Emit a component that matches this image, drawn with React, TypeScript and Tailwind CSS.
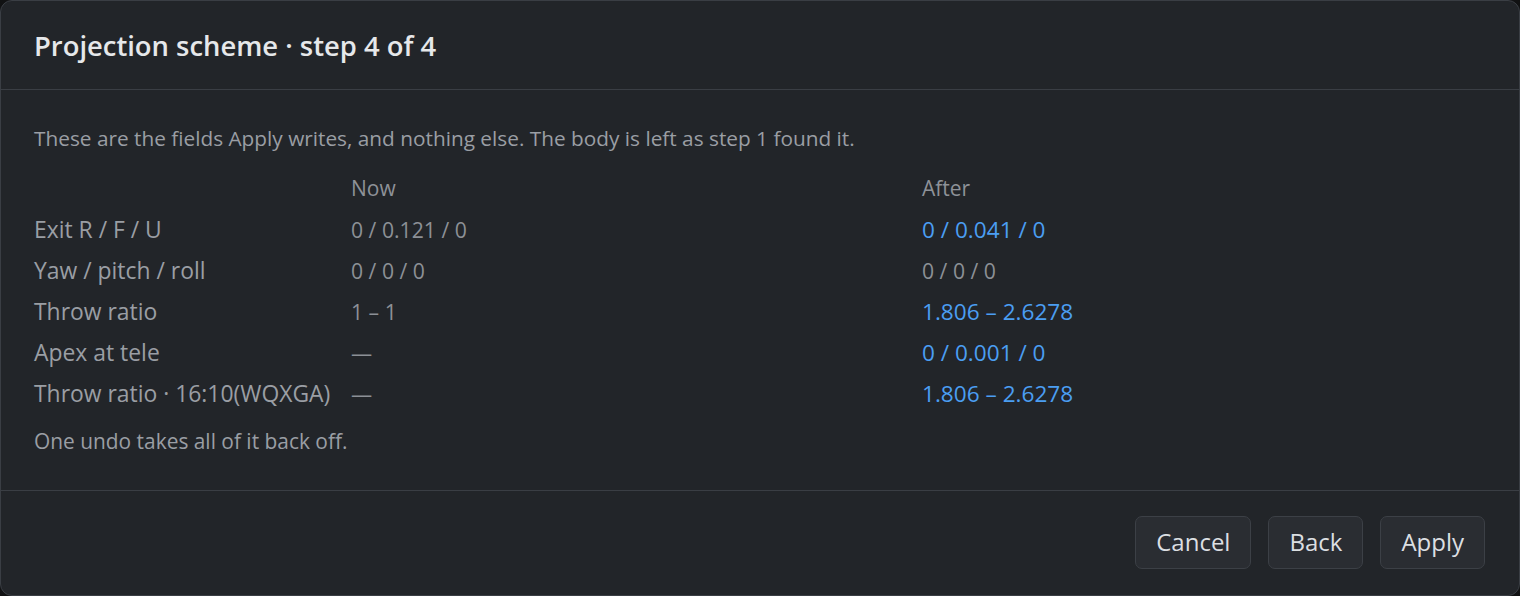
const rows = [
  { label: "Exit R / F / U", now: "0 / 0.121 / 0", after: "0 / 0.041 / 0", changed: true },
  { label: "Yaw / pitch / roll", now: "0 / 0 / 0", after: "0 / 0 / 0", changed: false },
  { label: "Throw ratio", now: "1 – 1", after: "1.806 – 2.6278", changed: true },
  { label: "Apex at tele", now: "—", after: "0 / 0.001 / 0", changed: true },
  { label: "Throw ratio · 16:10(WQXGA)", now: "—", after: "1.806 – 2.6278", changed: true },
];

export default function App() {
  return (
    <div className="h-[596px] bg-[#111213] font-['Open_Sans',sans-serif]">
      <div className="flex h-full flex-col rounded-[12px] border border-[#3a3e44] bg-[#222529]">
        <div className="flex h-[89px] items-center border-b border-[#3a3e44] px-[33px] pt-[2px]">
          <h2 className="text-[27.4px] font-semibold leading-none text-[#e6e8ea]">Projection scheme · step 4 of 4</h2>
        </div>

        <div className="flex-1 px-[33px] pt-[34px]">
          <p className="text-[20.8px] leading-[28px] text-[#9a9ea4]">
            These are the fields Apply writes, and nothing else. The body is left as step 1 found it.
          </p>

          <div className="mt-[16px] grid grid-cols-[317px_571px_1fr] auto-rows-[41px] items-center">
            <div />
            <div className="text-[21px] text-[#8e9298]">Now</div>
            <div className="text-[21px] text-[#8e9298]">After</div>
            {rows.map((r) => (
              <div key={r.label} className="contents">
                <div className="pt-[2px] text-[22.9px] text-[#9a9ea4]">{r.label}</div>
                <div className="text-[21.2px] text-[#8c9096]">{r.now}</div>
                {r.changed ? (
                  <div className="text-[22.6px] text-[#4b9ef2]">{r.after}</div>
                ) : (
                  <div className="text-[21.2px] text-[#8c9096]">{r.after}</div>
                )}
              </div>
            ))}
          </div>

          <p className="mt-[13px] text-[20.9px] leading-[28px] text-[#9a9ea4]">One undo takes all of it back off.</p>
        </div>

        <div className="flex h-[105px] items-center justify-end gap-[17px] border-t border-[#3a3e44] px-[34px] pb-[2px]">
          <button className="h-[53px] rounded-[7px] border border-[#3c4046] bg-[#2a2d32] px-5 text-[24px] text-[#dcdfe2]">
            Cancel
          </button>
          <button className="h-[53px] rounded-[7px] border border-[#3c4046] bg-[#2a2d32] px-5 text-[24px] text-[#dcdfe2]">
            Back
          </button>
          <button className="h-[53px] rounded-[7px] border border-[#3c4046] bg-[#2a2d32] px-5 text-[24px] text-[#dcdfe2]">
            Apply
          </button>
        </div>
      </div>
    </div>
  );
}
